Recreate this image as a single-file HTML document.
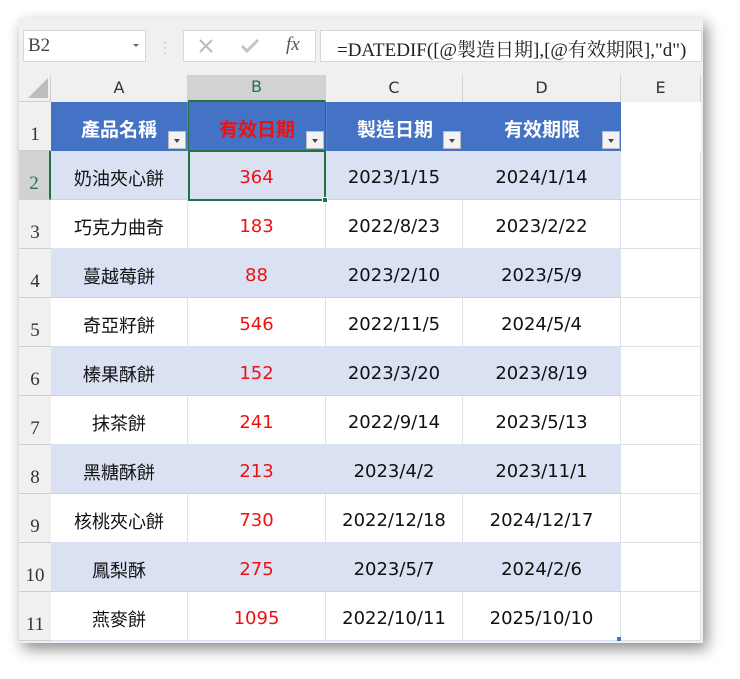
<!DOCTYPE html>
<html><head><meta charset="utf-8"><style>
*{margin:0;padding:0;box-sizing:border-box}
body{width:740px;height:679px;background:#fff;position:relative;overflow:hidden;font-family:"Liberation Sans","Noto Sans CJK TC",sans-serif}
.win{position:absolute;left:19px;top:18px;width:684px;height:625px;background:#f0f0f0;box-shadow:4px 6px 14px rgba(0,0,0,.45)}
.a{position:absolute}
.cell{position:absolute;display:flex;align-items:center;justify-content:center;font-family:"DejaVu Sans","Noto Sans CJK TC",sans-serif;font-size:18px;color:#111;border-right:1px solid #d4d4d4;border-bottom:1px solid #d4d4d4;padding-top:5px}
.rh{position:absolute;left:19px;width:32px;font-family:"Liberation Serif",serif;font-size:19px;color:#333;display:flex;align-items:flex-end;justify-content:center;padding-bottom:4px;border-bottom:1px solid #d0d0d0;background:#f0f0f0}
.ch{position:absolute;top:75px;height:27px;display:flex;align-items:center;justify-content:center;font-family:"DejaVu Sans",sans-serif;font-size:16px;color:#333;border-right:1px solid #d0d0d0;padding-bottom:3px}
.hd{position:absolute;top:102px;height:49px;background:#4472c4;color:#fff;font-weight:bold;font-size:19px;display:flex;align-items:center;justify-content:center;padding-top:4px}
.dd{position:absolute;width:18px;height:18px;background:#f3f3f3;border:1px solid #bbb}
.dd:after{content:"";position:absolute;left:5px;top:7px;border-left:3.5px solid transparent;border-right:3.5px solid transparent;border-top:4px solid #444}
.red{color:#f01010}
</style></head><body>
<div class="win"></div>
<div class="a" style="left:23px;top:30px;width:123px;height:32px;background:#fff;border:1px solid #d8d8d8;font-family:'Liberation Serif',serif;font-size:19px;color:#444;padding:4px 0 0 4px">B2<span style="position:absolute;right:6px;top:13px;border-left:3px solid transparent;border-right:3px solid transparent;border-top:3px solid #666"></span></div>
<div class="a" style="left:163px;top:40px;color:#aaa;font-size:12px;line-height:5px">·<br>·<br>·</div>
<div class="a" style="left:183px;top:30px;width:133px;height:32px;background:#fff;border:1px solid #d8d8d8"></div>
<svg class="a" style="left:198px;top:38px" width="16" height="16"><path d="M2 2L14 14M14 2L2 14" stroke="#bbb" stroke-width="2"/></svg>
<svg class="a" style="left:240px;top:38px" width="20" height="16"><path d="M2 8L7 13L18 2" stroke="#c4c4c4" stroke-width="3" fill="none"/></svg>
<div class="a" style="left:286px;top:34px;font-family:'Liberation Serif',serif;font-style:italic;font-size:19px;color:#555">fx</div>
<div class="a" style="left:320px;top:30px;width:382px;height:32px;background:#fff;border:1px solid #d8d8d8;font-family:'Liberation Serif','Noto Serif CJK SC',serif;font-size:19px;color:#222;padding:4px 0 0 16px;white-space:nowrap">=DATEDIF([@製造日期],[@有效期限],"d")</div>
<div class="a" style="left:19px;top:75px;width:32px;height:27px;border-right:1px solid #d0d0d0;border-bottom:1px solid #d0d0d0"></div>
<div class="a" style="left:28px;top:78px;width:0;height:0;border-left:20px solid transparent;border-bottom:20px solid #bdbdbd"></div>
<div class="ch" style="left:51px;width:137px">A</div>
<div class="ch" style="left:188px;width:138px;background:#d2d2d2;color:#217346;border-bottom:2px solid #217346">B</div>
<div class="ch" style="left:326px;width:137px">C</div>
<div class="ch" style="left:463px;width:158px">D</div>
<div class="ch" style="left:621px;width:80px">E</div>
<div class="a" style="left:51px;top:102px;width:650px;height:539px;background:#fff"></div>
<div class="rh" style="top:102px;height:49px">1</div>
<div class="hd" style="left:51px;width:137px;border-right:1px solid #5b82cc">產品名稱</div>
<div class="hd red" style="left:188px;width:138px;color:#f01010;border-left:1px solid #217346;border-right:1px solid #217346">有效日期</div>
<div class="hd" style="left:326px;width:137px;border-left:1px solid #5b82cc">製造日期</div>
<div class="hd" style="left:463px;width:158px">有效期限</div>
<div class="dd" style="left:168px;top:131px"></div>
<div class="dd" style="left:306px;top:131px"></div>
<div class="dd" style="left:443px;top:131px"></div>
<div class="dd" style="left:602px;top:131px"></div>
<div id="rows"></div>
<script>
var d=[["奶油夾心餅",364,"2023/1/15","2024/1/14"],["巧克力曲奇",183,"2022/8/23","2023/2/22"],["蔓越莓餅",88,"2023/2/10","2023/5/9"],["奇亞籽餅",546,"2022/11/5","2024/5/4"],["榛果酥餅",152,"2023/3/20","2023/8/19"],["抹茶餅",241,"2022/9/14","2023/5/13"],["黑糖酥餅",213,"2023/4/2","2023/11/1"],["核桃夾心餅",730,"2022/12/18","2024/12/17"],["鳳梨酥",275,"2023/5/7","2024/2/6"],["燕麥餅",1095,"2022/10/11","2025/10/10"]];
var h="",L=[51,188,326,463,621],W=[137,138,137,158,80];
d.forEach(function(r,i){var t=151+i*49,bg=i%2==0?"#d9e1f2":"#fff";
var rs=i==0?"background:#d2d2d2;color:#217346;border-right:2px solid #217346;":"";
h+='<div class="rh" style="top:'+t+'px;height:49px;'+rs+'">'+(i+2)+'</div>';
var v=[r[0],r[1],r[2],r[3],""];
for(var j=0;j<5;j++){var b=j==4?"#fff":bg;var bc=j==4?"#e0e0e0":(i%2==0?"#c9d3e8":"#d9e1f2");
h+='<div class="cell'+(j==1?' red':'')+'" style="left:'+L[j]+'px;top:'+t+'px;width:'+W[j]+'px;height:49px;background:'+b+';border-right-color:'+(j==4?'#e0e0e0':'#dde2ea')+';border-bottom-color:'+bc+'">'+v[j]+'</div>';}
});
h+='<div class="a" style="left:188px;top:150px;width:138px;height:51px;border:2px solid #217346"></div><div class="a" style="left:322px;top:197px;width:6px;height:6px;background:#217346;border:1px solid #fff"></div>';
h+='<div class="a" style="left:617px;top:637px;width:4px;height:4px;background:#4472c4"></div>';
document.getElementById("rows").innerHTML=h;
</script>
</body></html>
